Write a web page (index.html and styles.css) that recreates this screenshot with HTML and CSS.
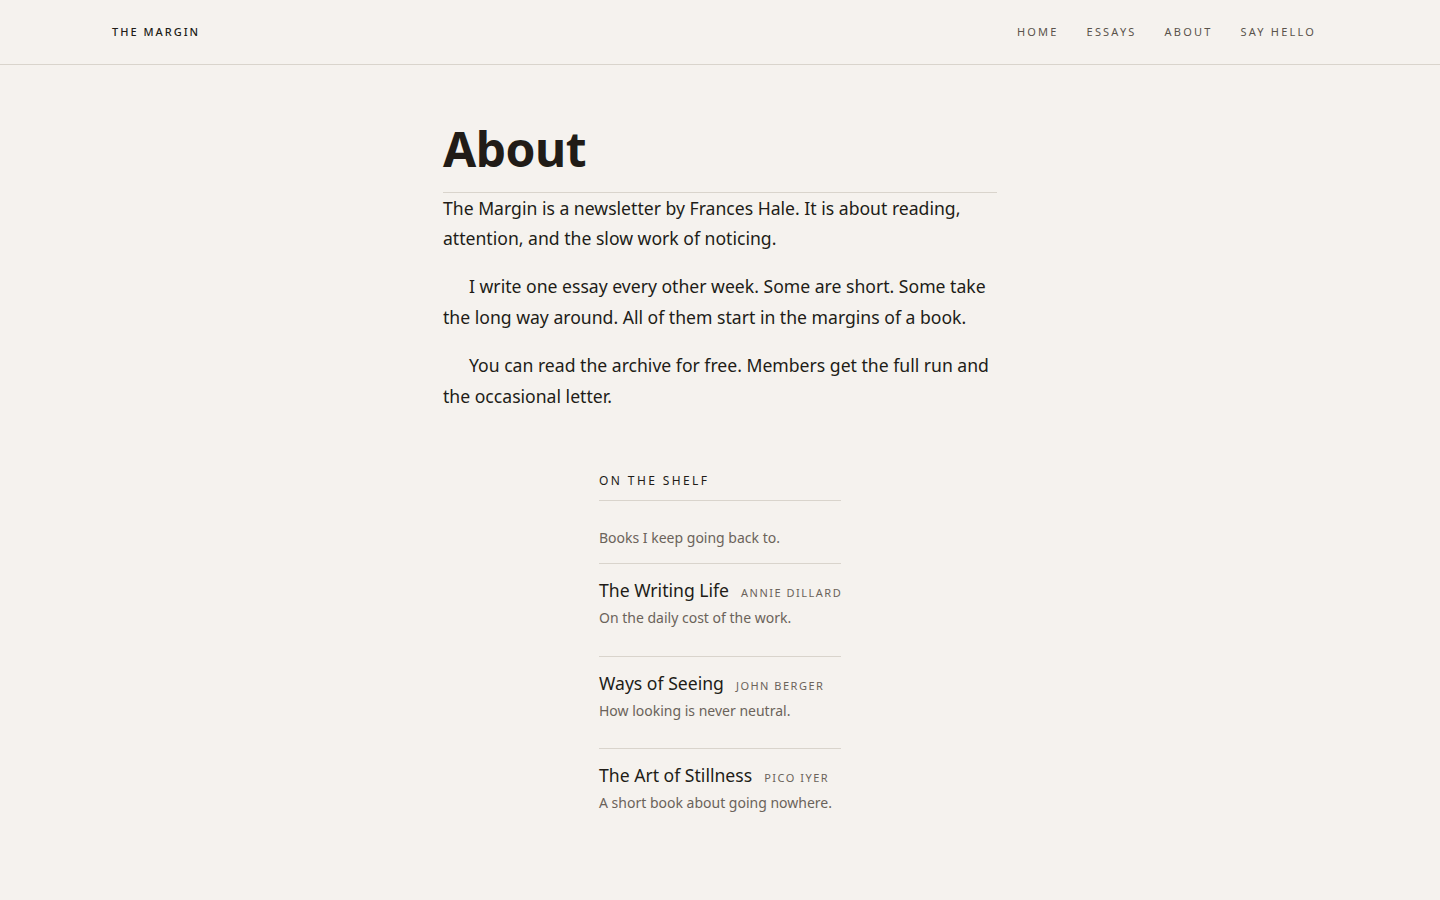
FILE: index.html
```html
<!DOCTYPE html>
<html lang="en">
<head>
    <meta charset="UTF-8">
    <meta name="viewport" content="width=device-width, initial-scale=1.0">
    <title>About · The Margin</title>
    <link rel="stylesheet" href="styles.css">
</head>
<body>
    <header class="site-header">
        <div class="header-inner">
            <a class="logo" href="#">The Margin</a>
            <nav class="nav">
                <a href="#">Home</a>
                <a href="#">Essays</a>
                <a href="#">About</a>
                <a href="#">Say hello</a>
            </nav>
        </div>
    </header>

    <main class="page">
        <h1 class="page-title">About</h1>
        <div class="prose">
            <p>The Margin is a newsletter by Frances Hale. It is about reading, attention, and the slow work of noticing.</p>
            <p>I write one essay every other week. Some are short. Some take the long way around. All of them start in the margins of a book.</p>
            <p>You can read the archive for free. Members get the full run and the occasional letter.</p>
        </div>

        <section class="shelf">
            <h2 class="shelf-label">On the shelf</h2>
            <p class="shelf-intro">Books I keep going back to.</p>
            <ul class="shelf-list">
                <li class="book">
                    <div class="book-head">
                        <span class="book-title">The Writing Life</span>
                        <span class="book-author">Annie Dillard</span>
                    </div>
                    <p class="book-note">On the daily cost of the work.</p>
                </li>
                <li class="book">
                    <div class="book-head">
                        <span class="book-title">Ways of Seeing</span>
                        <span class="book-author">John Berger</span>
                    </div>
                    <p class="book-note">How looking is never neutral.</p>
                </li>
                <li class="book">
                    <div class="book-head">
                        <span class="book-title">The Art of Stillness</span>
                        <span class="book-author">Pico Iyer</span>
                    </div>
                    <p class="book-note">A short book about going nowhere.</p>
                </li>
            </ul>
        </section>
    </main>
</body>
</html>
```

FILE: styles.css
```css
* {
    margin: 0;
    padding: 0;
    box-sizing: border-box;
}

body {
    background: #f5f2ee;
    color: #211c17;
    font-family: "Noto Sans", "Open Sans", sans-serif;
}

a {
    color: inherit;
    text-decoration: none;
}

/* Header */

.site-header {
    border-bottom: 1px solid #d9d4cc;
}

.header-inner {
    height: 64px;
    padding: 0 124px 2px 112px;
    display: flex;
    align-items: center;
    justify-content: space-between;
}

.logo {
    font-size: 11px;
    font-weight: 500;
    letter-spacing: 2px;
    text-transform: uppercase;
    color: #211c17;
}

.nav {
    display: flex;
    gap: 28px;
}

.nav a {
    font-size: 11px;
    letter-spacing: 0.2em;
    text-transform: uppercase;
    color: #5a534b;
}

/* Page */

.page {
    max-width: 554px;
    margin: 0 auto;
    padding: 55px 0 80px;
}

.page-title {
    font-size: 48px;
    font-weight: 700;
    line-height: 1.2;
    letter-spacing: -0.01em;
    padding-bottom: 14px;
    border-bottom: 1px solid #d9d4cc;
}

.prose p {
    font-size: 1.1rem;
    line-height: 1.75;
    margin-bottom: 17px;
}

.prose p + p {
    text-indent: 26px;
}

/* Shelf */

.shelf {
    width: 242px;
    margin: 61px auto 0;
}

.shelf-label {
    font-size: 12px;
    font-weight: 400;
    line-height: 18px;
    letter-spacing: 0.2em;
    text-transform: uppercase;
    padding-bottom: 10px;
    border-bottom: 1px solid #d9d4cc;
}

.shelf-intro {
    font-size: 14px;
    line-height: 22px;
    color: #6b635a;
    padding: 26px 0 14px;
    border-bottom: 1px solid #d9d4cc;
}

.shelf-list {
    list-style: none;
}

.book {
    padding: 13px 0 26.5px;
}

.book + .book {
    border-top: 1px solid #d9d4cc;
}

.book-head {
    display: flex;
    align-items: baseline;
    gap: 12px;
    white-space: nowrap;
}

.book-title {
    font-size: 1.1rem;
    line-height: 27px;
    color: #211c17;
}

.book-author {
    font-size: 11px;
    letter-spacing: 1.5px;
    text-transform: uppercase;
    color: #6b635a;
}

.book-note {
    font-size: 14px;
    line-height: 22px;
    color: #6b635a;
    margin-top: 3px;
}
```
